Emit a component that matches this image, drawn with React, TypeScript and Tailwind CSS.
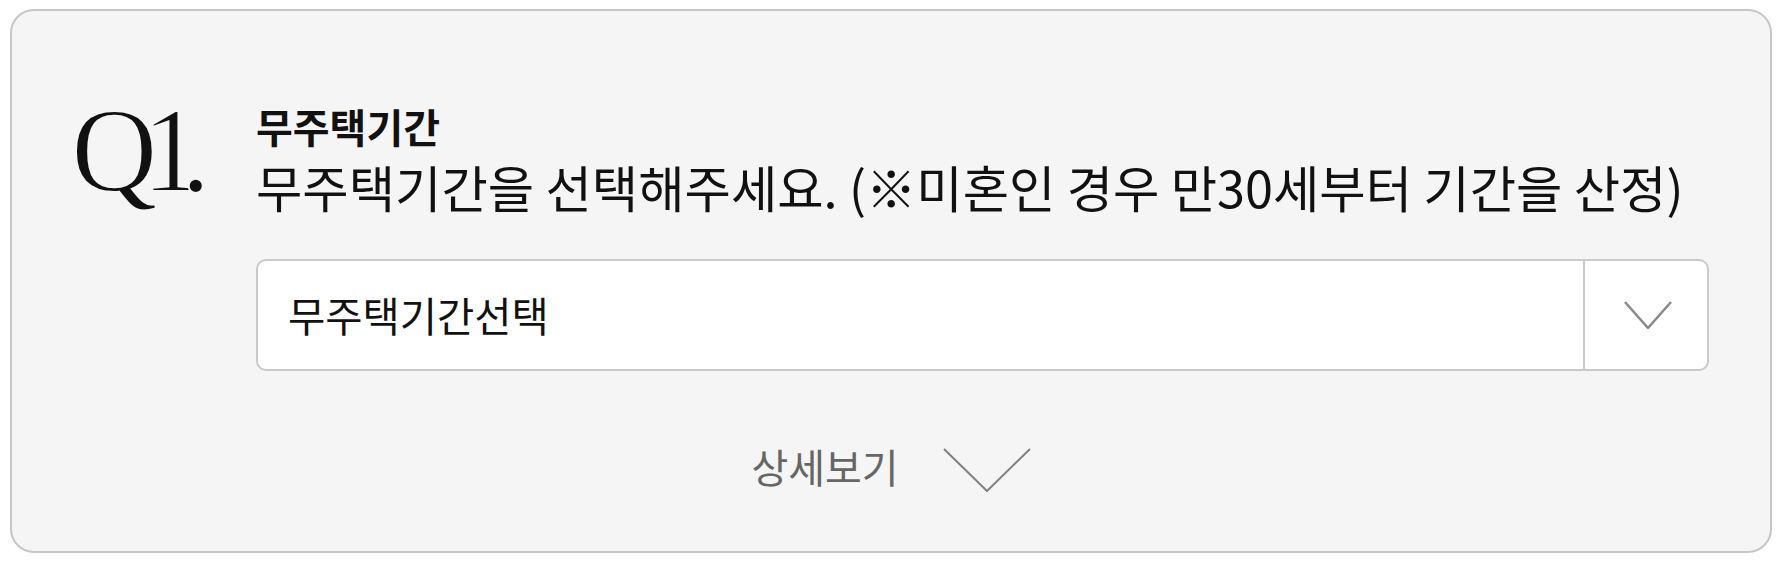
import React from 'react';

const KR = { fontFamily: '"Noto Sans CJK KR", "Noto Sans", sans-serif' };

const ChevronDown: React.FC<{ className?: string; w: number; h: number; stroke: string; sw: number }> = ({ className, w, h, stroke, sw }) => (
  <svg className={className} width={w} height={h} viewBox={`0 0 ${w} ${h}`} fill="none">
    <polyline points={`1,1 ${w / 2},${h - 1} ${w - 1},1`} stroke={stroke} strokeWidth={sw} />
  </svg>
);

const App: React.FC = () => {
  return (
    <div className="w-[1783px] h-[563px] bg-white pt-[9px] pl-[10px]" style={KR}>
      <div className="w-[1762px] h-[544px] rounded-[24px] border-2 border-[#c6c6c6] bg-[#f5f5f5] pt-[80px] pl-[59px]">
        <div className="flex items-start">
          {/* question number */}
          <div className="w-[185px] shrink-0 text-[120px] leading-[120px] text-[#111] font-['Liberation_Serif',serif] whitespace-nowrap [-webkit-text-stroke:2px_#f5f5f5]">
            <span className="tracking-[-16px]">Q</span>
            <span>1</span>
            <span className="ml-[-21px]">.</span>
          </div>

          <div className="w-[1453px] pt-[12px]">
            <p className="text-[40px] leading-[46px] font-bold text-[#111]">무주택기간</p>
            <p className="mt-[8px] text-[50.4px] leading-[60px] text-[#111] whitespace-nowrap">
              무주택기간을 선택해주세요. (※미혼인 경우 만30세부터 기간을 산정)
            </p>

            {/* select */}
            <div className="mt-[42px] h-[112px] flex rounded-[10px] border-2 border-[#cacaca] bg-white">
              <div className="flex-1 flex items-center pl-[30px] text-[40.5px] text-[#111]">무주택기간선택</div>
              <div className="w-[124px] border-l-2 border-[#cacaca] flex items-center justify-center">
                <ChevronDown w={48} h={28} stroke="#8a8a8a" sw={2.5} className="ml-[4px]" />
              </div>
            </div>
          </div>
        </div>

        {/* detail toggle */}
        <div className="mt-[69px] flex justify-center items-start pr-[59px]">
          <span className="mt-[4px] text-[40px] leading-[44px] text-[#666]">상세보기</span>
          <ChevronDown w={88} h={44} stroke="#808080" sw={2} className="ml-[44px] mt-[8px]" />
        </div>
      </div>
    </div>
  );
};

export default App;
